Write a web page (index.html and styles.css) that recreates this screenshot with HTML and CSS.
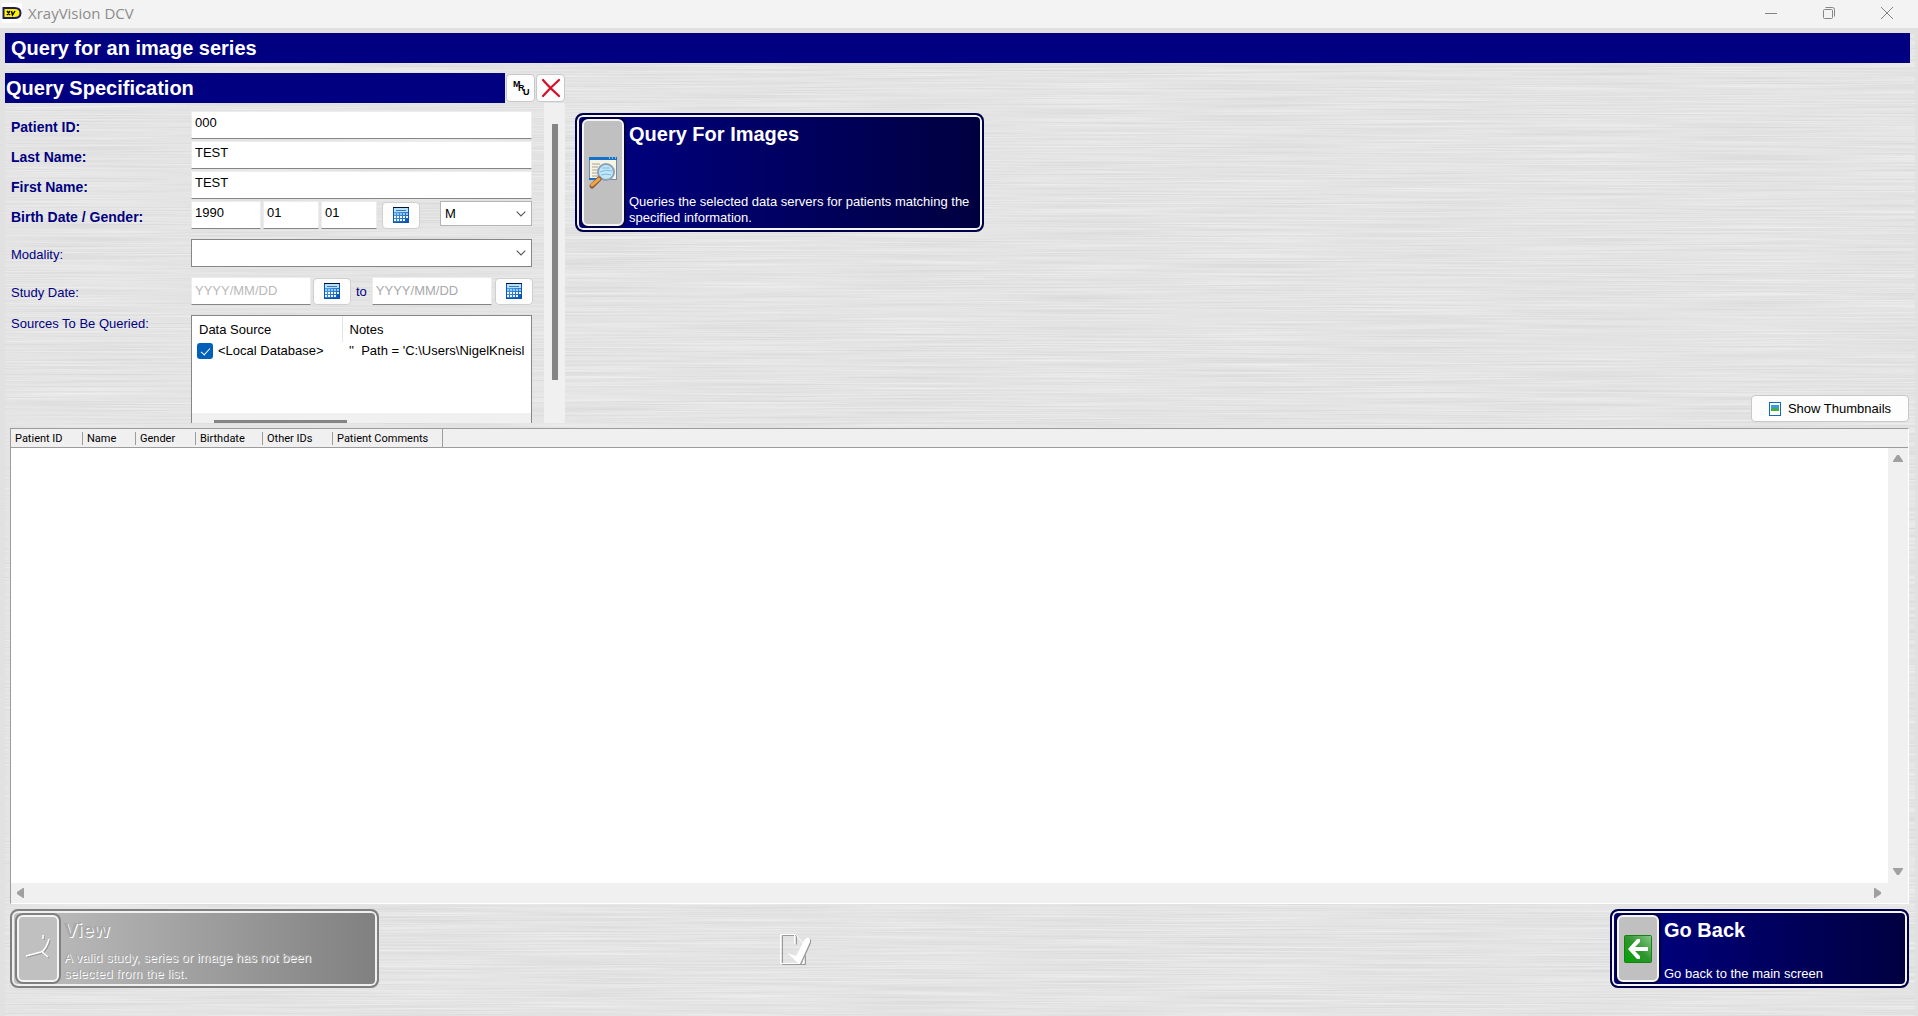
FILE: index.html
```html
<!DOCTYPE html>
<html lang="en">
<head>
<meta charset="utf-8">
<title>XrayVision DCV</title>
<link rel="stylesheet" href="styles.css">
</head>
<body>
<svg class="defs" width="0" height="0" aria-hidden="true">
  <defs>
    <linearGradient id="calBlue" x1="0" y1="0" x2="1" y2="1"><stop offset="0" stop-color="#5fb0ec"/><stop offset="1" stop-color="#0a50b4"/></linearGradient>
    <linearGradient id="green" x1="0" y1="1" x2="1" y2="0"><stop offset="0" stop-color="#00a400"/><stop offset=".5" stop-color="#2c962c"/><stop offset="1" stop-color="#8cc88c"/></linearGradient>
    <symbol id="calendar" viewBox="0 0 16 16">
      <rect width="16" height="16" fill="#0b55b5"/><rect x="1" y="2" width="14" height="13" fill="url(#calBlue)"/>
      <rect width="16" height="1" fill="#02103c"/><rect x="1" y="1" width="14" height="4" fill="#b8e0fa"/><rect x="3" y="3" width="10" height="1" fill="#3c78be"/>
      <path d="M1 6h2v2H1zM4 6h2v2H4zM7 6h2v2H7zM10 6h2v2h-2zM13 6h2v2h-2z" fill="#8fcaf8"/>
      <path d="M1 9h2v2H1zM4 9h2v2H4zM7 9h2v2H7zM10 9h2v2h-2zM13 9h2v2h-2zM1 12h2v2H1zM4 12h2v2H4zM7 12h2v2H7zM10 12h2v2h-2z" fill="#eef7ff"/>
    </symbol>
    <symbol id="chevron" viewBox="0 0 10 6"><path d="M.7.7 5 5 9.300.7" fill="none" stroke="#555" stroke-width="1.100"/></symbol>
  </defs>
</svg>
<header class="titlebar">
  <svg class="logo" width="20" height="20" viewBox="0 0 20 20"><rect width="20" height="20" fill="#fff"/><path d="M1.500 5h11q6 0 6 5t-6 5h-11z" fill="#fff200" stroke="#1c1c64" stroke-width="2"/><path d="M5 8l3 4M8 8l-3 4M9.500 8l1 4L13 8" stroke="#000" stroke-width="1.400" fill="none"/></svg>
  <h1 class="app-name">XrayVision DCV</h1>
  <button class="win-btn" aria-label="Minimize"><svg width="14" height="14" viewBox="0 0 14 14"><path d="M1 7.500h12"/></svg></button>
  <button class="win-btn" aria-label="Restore"><svg width="14" height="14" viewBox="0 0 14 14"><rect x="1.500" y="3.500" width="9" height="9" rx="1"/><path d="M3.500 1.500h7q2 0 2 2v7"/></svg></button>
  <button class="win-btn" aria-label="Close"><svg width="14" height="14" viewBox="0 0 14 14"><path d="M1 1l12 12M13 1L1 13"/></svg></button>
</header>
<main class="workspace">
  <svg class="brushed" width="100%" height="100%" preserveAspectRatio="none" aria-hidden="true">
    <filter id="steel" x="0" y="0" width="100%" height="100%" color-interpolation-filters="sRGB">
      <feTurbulence type="fractalNoise" baseFrequency="0.006 0.700" numOctaves="2" seed="4"/>
      <feColorMatrix values=".11 0 0 0 .838  .11 0 0 0 .838  .11 0 0 0 .838  0 0 0 0 1"/>
    </filter>
    <rect width="100%" height="100%" filter="url(#steel)"/>
  </svg>
  <h2 class="banner">Query for an image series</h2>
  <div class="upper">
    <section class="spec">
      <div class="spec-head">
        <h2 class="spec-title">Query Specification</h2>
        <button class="tool" aria-label="Most recently used"><span class="mru"><i>M</i><i>R</i><i>U</i></span></button>
        <button class="tool" aria-label="Clear"><svg width="20" height="20" viewBox="0 0 20 20"><path d="M2 2q6 7 16 16M18 2Q10 9 2 18" fill="none" stroke="#d80c28" stroke-width="2.200" stroke-linecap="round"/></svg></button>
      </div>
      <div class="spec-body">
        <form class="fields">
          <label class="lab strong" for="pid">Patient ID:</label>
          <input class="box" id="pid" value="000">
          <label class="lab strong" for="lname">Last Name:</label>
          <input class="box" id="lname" value="TEST">
          <label class="lab strong" for="fname">First Name:</label>
          <input class="box" id="fname" value="TEST">
          <label class="lab strong" for="year">Birth Date / Gender:</label>
          <div class="line birth">
            <input class="box year" id="year" value="1990"><input class="box part" aria-label="Month" value="01"><input class="box part" aria-label="Day" value="01">
            <button type="button" class="cal" aria-label="Pick birth date"><svg width="16" height="16"><use href="#calendar"/></svg></button>
            <div class="drop gender"><select aria-label="Gender"><option>M</option><option>F</option></select><svg class="chev" width="10" height="6"><use href="#chevron"/></svg></div>
          </div>
          <label class="lab gap" for="modality">Modality:</label>
          <div class="drop wide gap"><select id="modality"><option></option></select><svg class="chev" width="10" height="6"><use href="#chevron"/></svg></div>
          <label class="lab gap" for="from">Study Date:</label>
          <div class="line gap">
            <input class="box date" id="from" placeholder="YYYY/MM/DD">
            <button type="button" class="cal from-cal" aria-label="Pick start date"><svg width="16" height="16"><use href="#calendar"/></svg></button>
            <label class="to" for="until">to</label>
            <input class="box date until" id="until" placeholder="YYYY/MM/DD">
            <button type="button" class="cal" aria-label="Pick end date"><svg width="16" height="16"><use href="#calendar"/></svg></button>
          </div>
          <span class="lab gap top">Sources To Be Queried:</span>
          <div class="sources gap">
            <table class="src-table">
              <thead><tr><th>Data Source</th><th>Notes</th></tr></thead>
              <tbody><tr><td><label class="check"><input type="checkbox" checked>&lt;Local Database&gt;</label></td><td>''&nbsp; Path = 'C:\Users\NigelKneisl</td></tr></tbody>
            </table>
            <div class="src-scroll"><span></span></div>
          </div>
        </form>
        <div class="vbar"><span></span></div>
      </div>
    </section>
    <div class="actions">
      <button class="big query">
        <span class="slot"><svg width="32" height="34" viewBox="0 0 32 34"><rect x="2.500" y="1.500" width="27" height="22" fill="#f8f4e4" stroke="#6c8cae"/><path d="M2 1h28v3H2z" fill="#1470c8"/><path d="M22 2h1M25 2h1M28 2h1" stroke="#fff"/><path d="M5 8h8M5 11h6M5 14h5M5 17h6M5 20h7" stroke="#a5a395"/><path d="M2 23h10" stroke="#1470c8" stroke-width="2"/><circle cx="19" cy="16" r="8" fill="#bfe8fa" stroke="#8da0b8" stroke-width="2"/><path d="M13 16q5-3 12-1M14 19q5-2 10 0M15 12h8" stroke="#83b9d8" fill="none"/><path d="M12 23L5 30" stroke="#8a5a3c" stroke-width="5" stroke-linecap="round"/><path d="M12 23L5 29" stroke="#f4a442" stroke-width="3" stroke-linecap="round"/></svg></span>
        <span class="words"><b>Query For Images</b><span>Queries the selected data servers for patients matching the specified information.</span></span>
      </button>
      <button class="thumbs"><svg width="12" height="14" viewBox="0 0 12 14"><rect x=".5" y=".5" width="11" height="13" fill="#fff" stroke="#1268c4"/><rect x="2" y="3" width="8" height="6" fill="#3e9ae0"/><path d="M2 9V7l3-1 5 1v2z" fill="#42b42c"/></svg>Show Thumbnails</button>
    </div>
  </div>
  <section class="results">
    <table class="res-table">
      <thead><tr><th class="c1">Patient ID</th><th class="c2">Name</th><th class="c3">Gender</th><th class="c4">Birthdate</th><th class="c5">Other IDs</th><th class="c6">Patient Comments</th><th></th></tr></thead>
    </table>
    <div class="res-body"></div>
    <div class="res-v"><svg width="10" height="8"><path d="M4 0h2l4 6v1H0V6z"/></svg><svg width="10" height="8"><path d="M0 0h10v1L6 7H4L0 1z"/></svg></div>
    <div class="res-h"><svg width="8" height="10"><path d="M7 0v10H6L0 6V4l6-4z"/></svg><svg width="8" height="10"><path d="M0 0h1l6 4v2l-6 4H0z"/></svg></div>
  </section>
  <footer class="bottom">
    <button class="big view" disabled>
      <span class="slot"><svg width="32" height="32" viewBox="0 0 32 32"><path d="M4 23l15-4M19 18l7 6M20 19q5-5 7-13M21 2v4" transform="translate(1 1)" fill="none" stroke="#999" stroke-width="1.500"/><path d="M4 23l15-4M19 18l7 6M20 19q5-5 7-13M21 2v4" fill="none" stroke="#fff" stroke-width="1.500"/></svg></span>
      <span class="words"><b>View</b><span>A valid study, series or image has not been selected from the list.</span></span>
    </button>
    <svg class="doc" width="32" height="34" viewBox="0 0 32 34" aria-hidden="true"><path d="M15.500 1.500H1.500v29h23v-9M15.500 1.500v9" transform="translate(1 1)" fill="none" stroke="#999"/><path d="M15.500 1.500H.5v29h23v-9M14.500 1.500v9M15 1l8 9" fill="none" stroke="#fff"/><path d="M7 20l9 3 9-17q3-3 5 0v3L20 31h-2z" transform="translate(1 1)" fill="#999"/><path d="M7 20l9 3 9-17q3-3 5 0v3L20 31h-2z" fill="#fff"/></svg>
    <button class="big back">
      <span class="slot"><svg width="28" height="28" viewBox="0 0 28 28"><rect x=".5" y=".5" width="27" height="27" rx="1" fill="url(#green)" stroke="#168016"/><path d="M4 14l9-10h3v3l-5 5h13v4H11l5 5v3h-3z" fill="#fff"/></svg></span>
      <span class="words"><b>Go Back</b><span>Go back to the main screen</span></span>
    </button>
  </footer>
</main>
</body>
</html>
```
FILE: styles.css
```css
* { box-sizing: border-box; }
html, body { height: 100%; }
body {
  margin: 0;
  display: flex;
  flex-direction: column;
  background: #e1e1e1;
  color: #000;
  font: 13px/16px "Liberation Sans", Arial, sans-serif;
  overflow: hidden;
}
button, input, select { font: inherit; color: inherit; margin: 0; border-radius: 0; }
h1, h2 { margin: 0; font-weight: normal; }
.defs { position: absolute; }

.titlebar { display: flex; align-items: center; height: 28px; flex: none; background: #f3f3f3; padding: 0 2px 2px; }
.app-name { flex: 1; padding-left: 6px; font: 15px/20px "Open Sans", "Noto Sans", sans-serif; color: #8c8c8c; }
.win-btn { width: 58px; height: 26px; border: 0; padding: 0; background: none; display: grid; place-items: center; }
.win-btn svg { fill: none; stroke: #858585; }

.workspace { position: relative; flex: 1; min-height: 0; display: flex; flex-direction: column; margin: 0 3px 0 5px; padding: 5px 6px 28px 0; }
.brushed { position: absolute; inset: 5px 0 0; z-index: -1; height: calc(100% - 5px); }

.banner, .spec-title { height: 30px; background: #000080; color: #fff; font-size: 20px; line-height: 30px; font-weight: bold; }
.banner { flex: none; padding-left: 6px; margin-right: -1px; }
.upper { flex: none; display: flex; height: 350px; margin-top: 10px; }
.spec { width: 560px; display: flex; flex-direction: column; flex: none; }
.spec-head { display: flex; align-items: center; gap: 1px; height: 30px; }
.spec-title { flex: 1; padding-left: 1px; }
.tool { width: 29px; height: 28px; padding: 0; background: #fdfdfd; border: 1px solid #c8c8c8; border-radius: 4px; display: grid; place-items: center; }
.mru { display: flex; font: bold 9px/9px "Liberation Sans", Arial, sans-serif; }
.mru i { font-style: normal; width: 5px; }
.mru i:nth-child(2) { padding-top: 4px; }
.mru i:nth-child(3) { padding-top: 8px; }
.spec-body { flex: 1; min-height: 0; display: flex; overflow: hidden; }
.fields { flex: 1; min-width: 0; padding: 8px 13px 0 6px; display: grid; grid-template-columns: 180px 1fr; row-gap: 2px; align-content: start; overflow: hidden; }
.lab { color: #000080; align-self: center; line-height: 20px; padding-top: 4px; }
.lab.strong { font-weight: bold; font-size: 14px; }
.lab.gap { margin-top: 8px; }
.lab.top { align-self: start; margin-top: 3px; }
.gap { margin-top: 8px; }
.box { height: 28px; min-width: 0; width: 100%; border: 1px solid #ececec; border-bottom-color: #868686; background: #fff; padding: 0 3px 6px; outline: 0; }
.line { display: flex; align-items: center; }
.birth { gap: 2px; }
.year { width: 70px; }
.part { width: 56px; }
.cal { width: 38px; height: 27px; flex: none; padding: 0; background: #fdfdfd; border: 1px solid #cfcfcf; border-radius: 4px; display: grid; place-items: center; }
.birth .cal { margin-left: 3px; }
.drop { position: relative; background: #fff; border: 1px solid #868686; }
.drop select { appearance: none; width: 100%; height: 100%; border: 0; background: none; padding: 0 4px; outline: 0; display: block; }
.chev { position: absolute; right: 5px; top: 50%; margin-top: -3px; pointer-events: none; }
.gender { width: 92px; height: 25px; flex: none; align-self: start; border-color: #b4b4b4; margin-left: 18px; margin-right: -3px; }
.wide { height: 28px; }
.date { width: 120px; flex: none; padding-bottom: 2px; }
.date::placeholder { color: #b9b9b9; opacity: 1; }
.from-cal { margin-left: 2px; }
.to { color: #000080; padding: 2px 5px 0; flex: 1; }
.until { margin-right: 3px; }
.until::placeholder { color: #a9a9a9; }
.line .cal:last-child { margin-right: -1px; }
.sources { height: 120px; border: 1px solid #868686; background: #fff; overflow: hidden; display: flex; flex-direction: column; }
.src-table { border-collapse: collapse; table-layout: fixed; width: 100%; white-space: nowrap; }
.src-table th { font-weight: normal; text-align: left; padding: 6px 7px 4px; width: 150px; height: 26px; border-right: 1px solid #e4e4e4; }
.src-table th:last-child { border: 0; width: auto; }
.src-table td { padding: 0 0 0 5px; height: 18px; overflow: hidden; }
.src-table td:last-child { padding-left: 7px; }
.check { display: flex; align-items: center; gap: 5px; }
.check input { appearance: none; width: 16px; height: 16px; border-radius: 3px; background: #005fb8; margin: 0; display: grid; place-items: center; }
.check input::after { content: ""; width: 4px; height: 8px; border: solid #fff; border-width: 0 1px 1px 0; transform: rotate(42deg); margin-top: -2px; }
.src-scroll { margin-top: auto; height: 21px; background: #f0f0f0; padding: 7px 0 0 22px; }
.src-scroll span { display: block; width: 133px; height: 6px; background: #858585; }
.vbar { width: 21px; background: #f0f0f0; padding: 21px 0 0 8px; }
.vbar span { display: block; width: 6px; height: 256px; background: #858585; }

.actions { flex: 1; display: flex; flex-direction: column; justify-content: space-between; padding: 40px 0 0 10px; }
.big { display: flex; gap: 4px; padding: 3px 3px 3px 4px; border: 2px solid #000048; border-radius: 8px; background: linear-gradient(90deg, #000084, #000040); box-shadow: inset 0 0 0 2px #f4f4fa; color: #fff; text-align: left; }
.slot { flex: none; width: 42px; background: #c0c0c0; border: 2px solid #f4f4f4; border-radius: 6px; box-shadow: 0 0 0 2px #000040; display: grid; place-items: center; margin: 1px; }
.words { flex: 1; display: flex; flex-direction: column; justify-content: space-between; padding: 4px 0 1px; }
.words b { font-size: 20px; line-height: 24px; }
.query { width: 409px; height: 119px; }
.thumbs { align-self: flex-end; width: 158px; height: 27px; margin-bottom: 1px; background: #fdfdfd; border: 1px solid #c8c8c8; border-radius: 4px; padding: 1px 0 0; display: flex; align-items: center; justify-content: center; gap: 7px; }

.results { flex: 1; min-height: 0; margin: 5px 0 0 5px; display: grid; grid-template: 19px 1fr 20px / 1fr 20px; background: #f0f0f0; border: 1px solid #9c9c9c; border-right-color: #fff; border-bottom-color: #fff; }
.res-table { grid-column: 1 / 3; width: 100%; border-collapse: collapse; table-layout: fixed; font: 11px/12px Roboto, "Liberation Sans", sans-serif; border-bottom: 1px solid #9c9c9c; }
.res-table th { font-weight: normal; text-align: left; padding: 1px 0 0 4px; background: linear-gradient(#9c9c9c, #9c9c9c) right 3px / 1px 13px no-repeat; white-space: nowrap; }
.res-table th:last-child { background: none; }
.res-table .c1 { width: 72px; }
.res-table .c2 { width: 53px; }
.res-table .c3 { width: 60px; }
.res-table .c4 { width: 67px; }
.res-table .c5 { width: 70px; }
.res-table .c6 { width: 110px; background-position: right 0; background-size: 1px 20px; }
.res-body { background: #fff; }
.res-v, .res-h { display: flex; justify-content: space-between; align-items: center; fill: #a0a0a0; }
.res-v { flex-direction: column; padding: 7px 0; }
.res-h { padding: 0 6px; }

.bottom { flex: none; display: flex; height: 79px; margin: 5px 0 0 5px; }
.view { width: 369px; color: #a8a8a8; border-color: #808080; background: linear-gradient(90deg, #c0c0c0, #808080); text-shadow: 1px 1px 0 #fff; box-shadow: inset 0 0 0 2px #f0f0f0; }
.view .words { padding-right: 44px; }
.view .slot { box-shadow: 0 0 0 2px #808080; }
.view, .back { height: 79px; }
.back { width: 299px; }
.doc { margin: 24px auto 0 401px; }
```
